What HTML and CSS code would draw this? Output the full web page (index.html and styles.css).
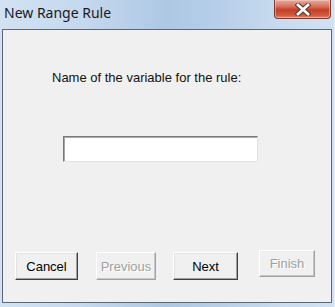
FILE: index.html
```html
<!DOCTYPE html>
<html lang="en">
<head>
    <meta charset="UTF-8">
    <title>New Range Rule</title>
    <link rel="stylesheet" href="styles.css">
</head>
<body>
    <div class="window">
        <div class="titlebar">
            <div class="title">New Range Rule</div>
            <div class="close-btn">
                <svg width="18" height="13" viewBox="0 0 18 13">
                    <path d="M4 2 L14 11 M14 2 L4 11" stroke="#4a3430" stroke-width="4.6" stroke-linecap="square"/>
                    <path d="M4 2 L14 11 M14 2 L4 11" stroke="#ffffff" stroke-width="2.8" stroke-linecap="square"/>
                </svg>
            </div>
        </div>

        <div class="client">
            <div class="label">Name of the variable for the rule:</div>
            <input class="name-input" type="text">

            <div class="buttons">
                <button class="btn btn-cancel">Cancel</button>
                <button class="btn btn-prev" disabled>Previous</button>
                <button class="btn btn-next">Next</button>
                <button class="btn btn-finish" disabled>Finish</button>
            </div>
        </div>
    </div>
</body>
</html>
```

FILE: styles.css
```css
* {
    margin: 0;
    padding: 0;
    box-sizing: border-box;
}

body {
    width: 335px;
    height: 307px;
    overflow: hidden;
    background: #c3d8ee;
    font-family: 'Liberation Sans', Arial, sans-serif;
}

.window {
    width: 335px;
    height: 307px;
    display: flex;
    flex-direction: column;
    background: linear-gradient(90deg, #d2e2f3 0%, #c4d8ee 25%, #aec8e4 50%, #b6cee8 65%, #c9dcf0 85%, #d0e1f2 100%);
    border-right: 1px solid #e4eef8;
}

.titlebar {
    height: 29px;
    display: flex;
    justify-content: space-between;
    align-items: flex-start;
}

.title {
    font-family: 'Noto Sans', 'Open Sans', sans-serif;
    font-size: 14px;
    line-height: 20px;
    color: #1a1a1a;
    padding: 3px 0 0 4px;
}

.close-btn {
    width: 57px;
    height: 19px;
    margin-right: 3px;
    border: 1px solid #7a3a2e;
    border-top: none;
    border-radius: 0 0 4px 4px;
    background: linear-gradient(180deg, #e7ab9c 0%, #d7735f 35%, #c43e26 55%, #cf5a40 85%, #e08a70 100%);
    box-shadow: inset 0 0 0 1px rgba(255, 220, 210, 0.45);
    display: flex;
    align-items: center;
    justify-content: center;
}

.client {
    flex: 1;
    margin: 0 2px 4px 2px;
    background: #f0f0f0;
    border: 1px solid #5d6874;
    display: flex;
    flex-direction: column;
}

.label {
    font-size: 13px;
    line-height: 16px;
    color: #111;
    margin: 40px 0 0 49px;
}

.name-input {
    width: 195px;
    height: 26px;
    margin: 50px 0 0 60px;
    background: #fff;
    border: 1px solid;
    border-color: #7a7a7a #e3e3e3 #e3e3e3 #7a7a7a;
    box-shadow: inset 1px 1px 0 #a8a8a8;
    outline: none;
}

.buttons {
    display: flex;
    align-items: flex-start;
    margin: 90px 0 0 12px;
}

.btn {
    height: 28px;
    font-family: 'Liberation Sans', Arial, sans-serif;
    font-size: 13px;
    color: #000;
    background: #f0f0f0;
    border: 1px solid;
    border-color: #fff #404040 #404040 #fff;
    box-shadow: inset -1px -1px 0 #a0a0a0, inset 1px 1px 0 #e3e3e3;
}

.btn:disabled {
    color: #a0a0a0;
    text-shadow: 1px 1px 0 #fff;
    border-color: #fff #a0a0a0 #a0a0a0 #fff;
    box-shadow: inset -1px -1px 0 #c8c8c8;
}

.btn-cancel {
    width: 63px;
}

.btn-prev {
    width: 60px;
    margin-left: 18px;
}

.btn-next {
    width: 65px;
    margin-left: 17px;
}

.btn-finish {
    width: 56px;
    height: 27px;
    margin-left: 21px;
    margin-top: -2px;
}
```
